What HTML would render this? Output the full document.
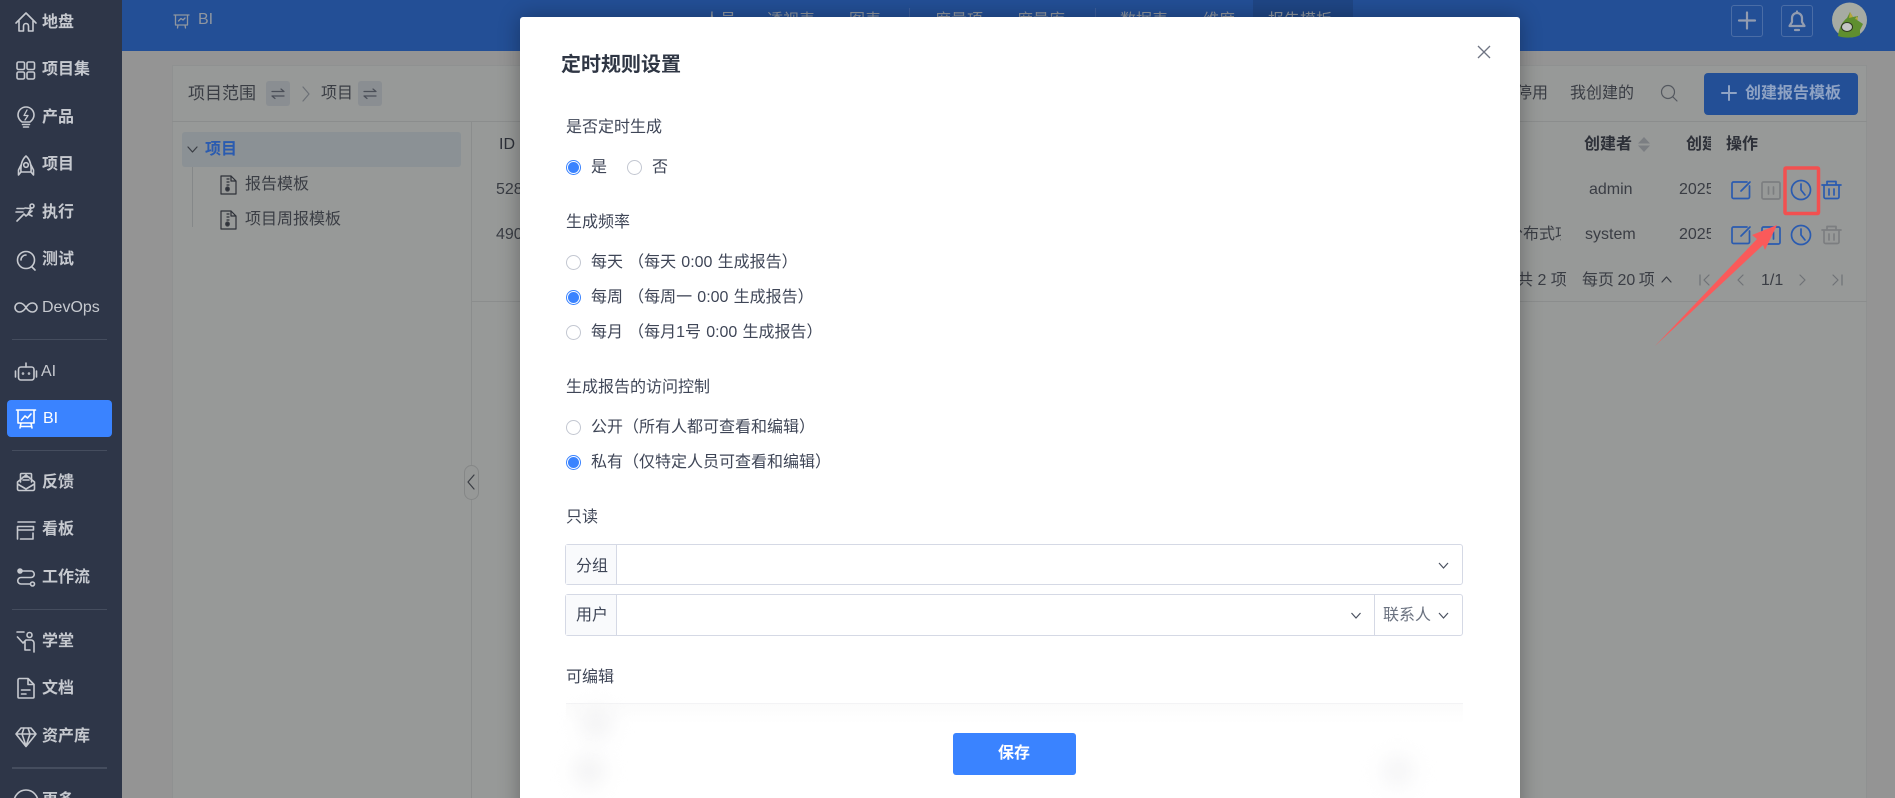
<!DOCTYPE html>
<html lang="zh-CN">
<head>
<meta charset="utf-8">
<title>定时规则设置</title>
<style>
html,body{margin:0;padding:0;width:1895px;height:798px;overflow:hidden;background:#949494}
body{font-family:"Liberation Sans","Noto Sans CJK SC",sans-serif;font-size:16px}
#root{position:absolute;left:0;top:0;width:1895px;height:798px;overflow:hidden;filter:blur(.35px)}
.a{position:absolute}
.t{position:absolute;white-space:nowrap;line-height:24px;font-size:16px;margin-top:1px}
.s{color:#c6c9cf;font-weight:700}
.d{color:#3a3d44}
.h{color:#2d3038;font-weight:700}
.n{color:#8f96a0}
.m{color:#3f4657}
.sep{position:absolute;left:12px;width:95px;height:1px;background:#454d5e}
.r{position:absolute;width:13px;height:13px;border:1px solid #c3c7d1;border-radius:50%;background:#fff}
.r.c{border-color:#3a83ff}
.r.c:after{content:"";position:absolute;left:1px;top:1px;width:11px;height:11px;border-radius:50%;background:#3a83ff}
svg{position:absolute;left:0;top:0}
</style>
</head>
<body>
<div id="root">
  <!-- top bar -->
  <div class="a" style="left:122px;top:0;width:1773px;height:51px;background:#234f96"></div>
  <div class="a" style="left:1253px;top:0;width:100px;height:51px;background:#1f4685"></div>
  <div class="a" style="left:909px;top:8px;width:1px;height:30px;background:#3c5f9c"></div>
  <div class="a" style="left:1095px;top:8px;width:1px;height:30px;background:#3c5f9c"></div>
  <span class="t n" style="left:198px;top:7px">BI</span>
  <span class="t n" style="left:704px;top:8px">人员</span>
  <span class="t n" style="left:767px;top:8px">透视表</span>
  <span class="t n" style="left:849px;top:8px">图表</span>
  <span class="t n" style="left:935px;top:8px">度量项</span>
  <span class="t n" style="left:1017px;top:8px">度量库</span>
  <span class="t n" style="left:1120px;top:8px">数据表</span>
  <span class="t n" style="left:1203px;top:8px">维度</span>
  <span class="t n" style="left:1268px;top:8px">报告模板</span>
  <div class="a" style="left:1731px;top:5px;width:30px;height:30px;border:1px solid #4a6da6;border-radius:3px"></div>
  <div class="a" style="left:1781px;top:5px;width:30px;height:30px;border:1px solid #4a6da6;border-radius:3px"></div>

  <!-- main card -->
  <div class="a" style="left:172px;top:65px;width:1695px;height:740px;background:#979998;border:1px solid #8f9191;box-sizing:border-box"></div>
  <div class="a" style="left:172px;top:121px;width:1695px;height:1px;background:#8b8d8d"></div>
  <div class="a" style="left:471px;top:122px;width:1px;height:680px;background:#8b8d8d"></div>
  <div class="a" style="left:472px;top:301px;width:1395px;height:1px;background:#8b8d8d"></div>

  <span class="t d" style="left:188px;top:81px;font-size:17px">项目范围</span>
  <div class="a" style="left:266px;top:81px;width:24px;height:25px;background:#8a8e92;border-radius:3px"></div>
  <span class="t d" style="left:321px;top:81px;font-size:16px">项目</span>
  <div class="a" style="left:358px;top:81px;width:24px;height:25px;background:#8a8e92;border-radius:3px"></div>

  <!-- tree -->
  <div class="a" style="left:182px;top:132px;width:279px;height:35px;background:#8b9195;border-radius:3px"></div>
  <div class="a" style="left:192px;top:167px;width:1px;height:60px;background:#858889"></div>
  <span class="t" style="left:205px;top:137px;font-weight:700;color:#2a5bb0">项目</span>
  <span class="t d" style="left:245px;top:172px">报告模板</span>
  <span class="t d" style="left:245px;top:207px">项目周报模板</span>

  <!-- table -->
  <span class="t h" style="left:499px;top:132px;font-weight:400">ID</span>
  <span class="t d" style="left:496px;top:177px">5280</span>
  <span class="t d" style="left:496px;top:222px">4900</span>
  <span class="t h" style="left:1584px;top:132px">创建者</span>
  <span class="a" style="left:1686px;top:132px;width:25px;height:26px;overflow:hidden"><span class="t h" style="left:0;top:0">创建时间</span></span>
  <span class="t h" style="left:1726px;top:132px">操作</span>
  <span class="t d" style="left:1589px;top:177px">admin</span>
  <span class="t d" style="left:1585px;top:222px">system</span>
  <span class="a" style="left:1679px;top:177px;width:32px;height:26px;overflow:hidden"><span class="t d" style="left:0;top:0">2025-</span></span>
  <span class="a" style="left:1679px;top:222px;width:32px;height:26px;overflow:hidden"><span class="t d" style="left:0;top:0">2025-</span></span>
  <span class="a" style="left:1507px;top:222px;width:54px;height:26px;overflow:hidden"><span class="t d" style="left:0;top:0">分布式项目</span></span>
  <span class="t d" style="left:1517px;top:268px">共 2 项</span>
  <span class="t d" style="left:1582px;top:268px;word-spacing:-1px">每页 20 项</span>
  <span class="t d" style="left:1761px;top:268px">1/1</span>
  <span class="t d" style="left:1516px;top:81px">停用</span>
  <span class="t d" style="left:1570px;top:81px">我创建的</span>
  <div class="a" style="left:1704px;top:73px;width:154px;height:42px;background:#234f96;border-radius:4px"></div>
  <span class="t" style="left:1745px;top:81px;color:#8fa3c4;font-weight:700">创建报告模板</span>

  <!-- collapse handle -->
  <div class="a" style="left:464px;top:465px;width:13px;height:33px;border:1px solid #858787;border-radius:8px;background:#969897"></div>

  <!-- sidebar -->
  <div class="a" style="left:0;top:0;width:122px;height:798px;background:#2e3648"></div>
  <div class="a" style="left:7px;top:400px;width:105px;height:37px;background:#3a83ff;border-radius:4px"></div>
  <div class="sep" style="top:339px"></div>
  <div class="sep" style="top:450px"></div>
  <div class="sep" style="top:609px"></div>
  <div class="sep" style="top:767px;height:2px"></div>
  <span class="t s" style="left:42px;top:10px">地盘</span>
  <span class="t s" style="left:42px;top:57px">项目集</span>
  <span class="t s" style="left:42px;top:105px">产品</span>
  <span class="t s" style="left:42px;top:152px">项目</span>
  <span class="t s" style="left:42px;top:200px">执行</span>
  <span class="t s" style="left:42px;top:247px">测试</span>
  <span class="t s" style="left:42px;top:295px;font-weight:400">DevOps</span>
  <span class="t s" style="left:41px;top:359px;font-weight:400">AI</span>
  <span class="t" style="left:43px;top:406px;color:#fff">BI</span>
  <span class="t s" style="left:42px;top:470px">反馈</span>
  <span class="t s" style="left:42px;top:517px">看板</span>
  <span class="t s" style="left:42px;top:565px">工作流</span>
  <span class="t s" style="left:42px;top:629px">学堂</span>
  <span class="t s" style="left:42px;top:676px">文档</span>
  <span class="t s" style="left:42px;top:724px">资产库</span>
  <span class="t s" style="left:42px;top:788px">更多</span>

  <!-- icons below modal -->
  <svg width="1895" height="798" viewBox="0 0 1895 798" fill="none" stroke-linecap="round" stroke-linejoin="round">
    <g stroke="#c6c9cf" stroke-width="1.6">
      <path d="M16 23 L26 13 L36 23 M19 21 V31 H23.5 V26 a2.5 2.5 0 0 1 5 0 V31 H33 V21"/>
      <rect x="17" y="62" width="7.5" height="7.5" rx="1.5"/><rect x="27" y="62" width="7.5" height="7.5" rx="1.5"/>
      <rect x="17" y="72" width="7.5" height="7" rx="1.5"/><rect x="27" y="72" width="7.5" height="7" rx="1.5"/>
      <path d="M22 122 C19.500 120 18 118 18 115 a8 8 0 0 1 16 0 c0 3 -1.500 5 -4 7 Z M22.500 124.500 H29.500 M23.500 127 H28.500"/>
      <path d="M27 110 L24 115.500 H28 L25 120" stroke-width="1.300"/>
      <path d="M26 156 C21.500 160 20.500 166 21 172 H31 C31.500 166 30.500 160 26 156 Z M21 165 L18.500 170 V175 L21 172 M31 165 L33.500 170 V175 L31 172"/>
      <circle cx="26" cy="165" r="2.300"/>
      <path d="M17 221 L24 214 L26 216 L32 211 M25 208 L31 208.500 L28 214 L32 216 M30 206 a2 2 0 1 0 4 0 a2 2 0 1 0 -4 0 M16 212 H23 M17 208.500 H24"/>
      <circle cx="26" cy="260" r="8.500"/><path d="M32 267 L35 270 M21 260 a5 5 0 0 1 5 -5"/>
      <path d="M26 307.500 C23.500 303.500 21.500 303 19.500 303 a4.500 4.500 0 0 0 0 9 C21.500 312 23.500 311.500 26 307.500 C28.500 303.500 30.500 303 32.500 303 a4.500 4.500 0 0 1 0 9 C30.500 312 28.500 311.500 26 307.500 Z"/>
      <rect x="18.500" y="367" width="15.500" height="13" rx="2.500"/><path d="M26 367 V363 M15.500 371 V377 M36.500 371 V377"/>
      <circle cx="23" cy="373.500" r=".5"/><circle cx="29" cy="373.500" r=".5"/>
      <path d="M17.500 482 L26 475 L34.500 482 V489 a1.500 1.500 0 0 1 -1.500 1.500 H19 a1.500 1.500 0 0 1 -1.500 -1.500 Z M17.500 484 L26 489 L34.500 484 M20.500 482 V474.500 a1 1 0 0 1 1 -1 H30.500 a1 1 0 0 1 1 1 V482 M23 477 H29 M23 480 H29"/>
      <path d="M18 522 H35 M17.500 530 V526.500 H33.500 V530 H17.500 M17.500 534 V539 M33 533 V539 H20.500 M17.500 530 V539"/>
      <circle cx="20" cy="571" r="2" fill="#c6c9cf"/><circle cx="32.500" cy="584" r="2"/>
      <path d="M22 571 H31 a3.200 3.200 0 0 1 0 6.500 H21 a3.200 3.200 0 0 0 0 6.500 H30 M24 577.500 H28"/>
      <circle cx="29.500" cy="635" r="2.500"/>
      <path d="M17 632 H24 M17.500 637 L23 643 L26 640 H31 a3 3 0 0 1 3 3 V652 M25 642 V650 H30"/>
      <path d="M18 680 a1.500 1.500 0 0 1 1.500 -1.500 H28 L34 684.500 V697 a1 1 0 0 1 -1 1 H19 a1 1 0 0 1 -1 -1 Z M28 678.500 V684.500 H34 M21.500 690 H30 M21.500 694 H26"/>
      <path d="M21 728 H31 L36 734 L26 746.500 L16 734 Z M16 734 H36 M22 734 L26 746 L30 734 M22 734 L24 728 M30 734 L28 728"/>
      <circle cx="26" cy="802" r="12"/>
    </g>
    <g stroke="#fff" stroke-width="1.600">
      <path d="M16.500 410 H35.500 M18 410 V423 H34 V410 M21 423 L20 428 M31 423 L32 428 M21 426.500 H31"/>
      <path d="M21.500 420 L25 416 L27.500 418 L31 414"/>
    </g>
    <g stroke="#8f96a0" stroke-width="1.300">
      <path d="M174 15 H189 M175.500 15 V25 H187.500 V15 M178 25 L177.500 28 M185 25 L185.500 28 M178.500 21 L181 18.500 L183 20 L185 18"/>
    </g>
    <g stroke="#929cb0" stroke-width="2.200">
      <path d="M1739 20.500 H1755 M1747 12.500 V28.500"/>
      <path d="M1789.500 26 H1804.500 L1802 22 V18 a5 5 0 0 0 -10 0 V22 Z M1797 12.500 V11.500 M1795 30 H1799"/>
    </g>
    <!-- avatar -->
    <circle cx="1849.500" cy="20" r="17.500" fill="#a6aba3"/>
    <path d="M1838 36 C1839 27 1843 21 1847 18 L1850 12 L1853 17 L1858 16 L1857 20 L1863 24 L1860 30 L1860 35 C1855 38 1845 38.500 1838 36 Z" fill="#5f8f2f"/>
    <path d="M1850 12 L1853 17 L1849 18 Z M1857 16 L1858 20 L1855 19 Z" fill="#b7a83a"/>
    <ellipse cx="1847" cy="27" rx="5.500" ry="4.500" fill="#c4c6c4" stroke="#2f3a22" stroke-width="1"/>
    <g stroke="#3a3d44" stroke-width="1.200">
      <path d="M272 91.500 H284 L281 89 M284 96 H272 L275 98.500" stroke="#4b4f58"/>
      <path d="M364 91.500 H376 L373 89 M376 96 H364 L367 98.500" stroke="#4b4f58"/>
      <path d="M303 87 L309 94 L303 101" stroke="#6c7076"/>
      <path d="M188 147 L192.500 152 L197 147"/>
      <path d="M474 475 L468 482 L474 489"/>
      <circle cx="1668" cy="92" r="6.500" stroke="#54585f"/><path d="M1673 97 L1677 101" stroke="#54585f"/>
      <path d="M1662 282 L1666.500 277 L1671 282" />
      <path d="M1700 275 V285 M1709 275 L1704 280 L1709 285 M1743 275 L1738 280 L1743 285 M1800 275 L1805 280 L1800 285 M1833 275 L1838 280 L1833 285 M1842 275 V285" stroke="#6f7276"/>
      <path d="M221 176 H231 L236 181 V194 H221 Z M231 176 V181 H236 M227 179 H229 M227 182 H229 M227 185 H229" stroke="#2e3138"/>
      <ellipse cx="227.500" cy="189" rx="1.800" ry="2" fill="#2e3138"/>
      <path d="M221 211 H231 L236 216 V229 H221 Z M231 211 V216 H236 M227 214 H229 M227 217 H229 M227 220 H229" stroke="#2e3138"/>
      <ellipse cx="227.500" cy="224" rx="1.800" ry="2" fill="#2e3138"/>
    </g>
    <path d="M1644 137 L1650 143.500 H1638 Z M1644 152 L1638 145.500 H1650 Z" fill="#7b7e82"/>
    <path d="M1722 93 H1736 M1729 86 V100" stroke="#8fa3c4" stroke-width="2"/>
    <g stroke="#2a5bb0" stroke-width="1.700">
      <path d="M1747 182 H1733.500 a1.500 1.500 0 0 0 -1.500 1.500 V197 a1.500 1.500 0 0 0 1.500 1.500 H1748 a1.500 1.500 0 0 0 1.500 -1.500 V186 M1741 191 L1750 182"/>
      <path d="M1747 227 H1733.500 a1.500 1.500 0 0 0 -1.500 1.500 V242 a1.500 1.500 0 0 0 1.500 1.500 H1748 a1.500 1.500 0 0 0 1.500 -1.500 V231 M1741 236 L1750 227"/>
      <circle cx="1801" cy="190" r="9.500"/><path d="M1801 184 V190 L1805 195"/>
      <circle cx="1801" cy="235" r="9.500"/><path d="M1801 229 V235 L1805 240"/>
      <path d="M1822 185 H1841 M1827 185 V181.500 H1836 V185 M1824 185 V197 a1.500 1.500 0 0 0 1.500 1.500 H1837.500 a1.500 1.500 0 0 0 1.500 -1.500 V185 M1829 189 V195 M1834 189 V195"/>
      <rect x="1762" y="227" width="18" height="17" rx="1.500"/><path d="M1768.500 232 V239 M1773.500 232 V239"/>
    </g>
    <g stroke="#7c7e80" stroke-width="1.700">
      <rect x="1762" y="182" width="18" height="17" rx="1.500"/><path d="M1768.500 187 V194 M1773.500 187 V194"/>
      <path d="M1822 230 H1841 M1827 230 V226.500 H1836 V230 M1824 230 V242 a1.500 1.500 0 0 0 1.500 1.500 H1837.500 a1.500 1.500 0 0 0 1.500 -1.500 V230 M1829 234 V240 M1834 234 V240"/>
    </g>
  </svg>

  <!-- modal -->
  <div class="a" style="left:520px;top:17px;width:1000px;height:800px;background:#fff;border-radius:3px;box-shadow:0 0 22px rgba(0,0,0,.32)">
    <span class="t" style="left:41px;top:35px;font-size:20px;font-weight:700;color:#2f3644">定时规则设置</span>
    <svg width="1000" height="60" viewBox="0 0 1000 60" fill="none"><path d="M958 29 L970 41 M970 29 L958 41" stroke="#6f7483" stroke-width="1.300"/></svg>
    <span class="t m" style="left:46px;top:98px">是否定时生成</span>
    <span class="r c" style="left:46px;top:143px"></span><span class="t m" style="left:71px;top:138px">是</span>
    <span class="r" style="left:107px;top:143px"></span><span class="t m" style="left:132px;top:138px">否</span>

    <span class="t m" style="left:46px;top:193px">生成频率</span>
    <span class="r" style="left:46px;top:238px"></span><span class="t m" style="left:71px;top:233px;word-spacing:.7px">每天 （每天 0:00 生成报告）</span>
    <span class="r c" style="left:46px;top:273px"></span><span class="t m" style="left:71px;top:268px;word-spacing:.7px">每周 （每周一 0:00 生成报告）</span>
    <span class="r" style="left:46px;top:308px"></span><span class="t m" style="left:71px;top:303px;word-spacing:.7px">每月 （每月1号 0:00 生成报告）</span>

    <span class="t m" style="left:46px;top:358px">生成报告的访问控制</span>
    <span class="r" style="left:46px;top:403px"></span><span class="t m" style="left:71px;top:398px">公开（所有人都可查看和编辑）</span>
    <span class="r c" style="left:46px;top:438px"></span><span class="t m" style="left:71px;top:433px">私有（仅特定人员可查看和编辑）</span>

    <span class="t m" style="left:46px;top:488px">只读</span>
    <div class="a" style="left:45px;top:527px;width:898px;height:41px;box-sizing:border-box;border:1px solid #d5d9e5;border-radius:3px"></div>
    <div class="a" style="left:46px;top:528px;width:50px;height:39px;background:#f9fafc;border-right:1px solid #d5d9e5"></div>
    <span class="t m" style="left:56px;top:537px">分组</span>
    <div class="a" style="left:45px;top:577px;width:898px;height:42px;box-sizing:border-box;border:1px solid #d5d9e5;border-radius:3px"></div>
    <div class="a" style="left:46px;top:578px;width:50px;height:40px;background:#f9fafc;border-right:1px solid #d5d9e5"></div>
    <span class="t m" style="left:56px;top:586px">用户</span>
    <div class="a" style="left:854px;top:578px;width:1px;height:40px;background:#d5d9e5"></div>
    <span class="t" style="left:863px;top:586px;color:#6b7280">联系人</span>
    <svg width="1000" height="700" viewBox="0 0 1000 700" fill="none" stroke="#4a5160" stroke-width="1.200">
      <path d="M919 546 L923.500 551 L928 546 M831.500 596 L836 601 L840.500 596 M919 596 L923.500 601 L928 596"/>
    </svg>

    <span class="t m" style="left:46px;top:648px">可编辑</span>
    <div class="a" style="left:46px;top:686px;width:897px;height:1px;background:#f3f3f5"></div>
    <div class="a" style="left:46px;top:687px;width:897px;height:20px;background:linear-gradient(#fbfbfb,#fff)"></div>
    <div class="a" style="left:60px;top:690px;width:32px;height:32px;border-radius:50%;background:#f3f3f4;filter:blur(10px)"></div>
    <div class="a" style="left:53px;top:738px;width:32px;height:32px;border-radius:50%;background:#f3f3f4;filter:blur(10px)"></div>
    <div class="a" style="left:862px;top:738px;width:32px;height:32px;border-radius:50%;background:#f5f5f6;filter:blur(10px)"></div>

    <div class="a" style="left:432.500px;top:716px;width:123px;height:42px;background:#3a83ff;border-radius:3px;color:#fff;font-weight:700;text-align:center;line-height:42px">保存</div>
  </div>

  <!-- annotation -->
  <svg width="1895" height="798" viewBox="0 0 1895 798" fill="none">
    <rect x="1785" y="168" width="33.500" height="45.500" stroke="#f25050" stroke-width="3.500" rx="1"/>
    <path d="M1655 346 L1757 239 L1752 235 L1777 225 L1765 250 L1763 245 Z" fill="#fa5a5a"/>
  </svg>
</div>
</body>
</html>
